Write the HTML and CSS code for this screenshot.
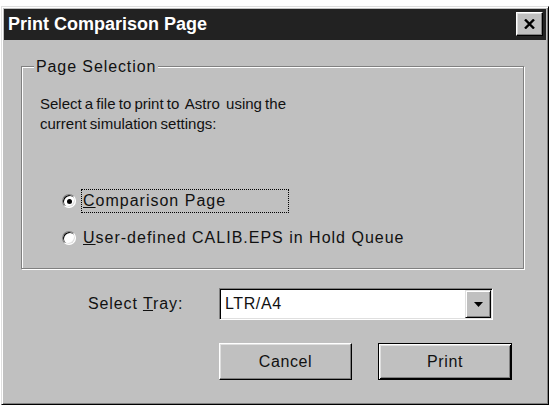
FILE: index.html
```html
<!DOCTYPE html>
<html>
<head>
    <meta charset="UTF-8">
    <meta name="viewport" content="width=device-width">
    <title>Print Comparison Page</title>
    <link rel="stylesheet" href="styles.css">
</head>
<body>
<div class="window">
    <div class="titlebar">
        <span class="title">Print Comparison Page</span>
        <button class="close" aria-label="Close">
            <svg width="11" height="10" viewBox="0 0 11 10">
                <path d="M1 0.5 L10 9.5 M10 0.5 L1 9.5" stroke="#000" stroke-width="2.4" fill="none"/>
            </svg>
        </button>
    </div>
    <div class="content">
        <div class="group">
            <span class="legend">Page Selection</span>
            <p class="intro">Select a file to print to&nbsp; Astro&nbsp; using the<br>current simulation settings:</p>
            <label class="radio-row">
                <span class="radio checked"></span>
                <span class="radio-label focus"><u>C</u>omparison Page</span>
            </label>
            <label class="radio-row second">
                <span class="radio"></span>
                <span class="radio-label"><u>U</u>ser-defined CALIB.EPS in Hold Queue</span>
            </label>
        </div>
        <div class="tray-row">
            <span class="tray-label">Select <u>T</u>ray:</span>
            <div class="combo">
                <span class="combo-value">LTR/A4</span>
                <span class="combo-btn">
                    <svg width="9" height="5" viewBox="0 0 9 5"><path d="M0 0 H9 L4.5 5 Z" fill="#000"/></svg>
                </span>
            </div>
        </div>
        <div class="buttons">
            <button class="btn">Cancel</button>
            <button class="btn default">Print</button>
        </div>
    </div>
</div>
</body>
</html>
```

FILE: styles.css
```css
/* Win95 style dialog */

body {
    background: #fff;
    margin: 0px;
    padding: 0px;
    font-family: "Liberation Sans", Arial, sans-serif;
    font-size: 16px;
    color: #111;
}

.window {
    box-sizing: border-box;
    width: 548px;
    height: 399px;
    margin: 6px 0 0 1px;
    padding: 2px;
    background: #c0c0c0;
    border: 1px solid;
    border-color: #dfdfdf #000 #000 #dfdfdf;
    box-shadow: inset 1px 1px 0 #fff, inset -1px -1px 0 #808080;
}

.titlebar {
    display: flex;
    height: 31px;
    padding-left: 4px;
    background: #222;
}

.title {
    align-self: center;
    color: #fff;
    font-size: 18px;
    font-weight: 700;
}

.close {
    box-sizing: border-box;
    display: flex;
    align-items: center;
    justify-content: center;
    width: 27px;
    height: 24px;
    margin: 3px 3px 0 auto;
    padding: 0;
    background: #c0c0c0;
    border: 1px solid;
    border-color: #fff #000 #000 #fff;
    box-shadow: inset -1px -1px 0 #808080, inset 1px 1px 0 #dfdfdf;
}

.content {
    display: flex;
    flex-direction: column;
}

.group {
    position: relative;
    box-sizing: border-box;
    width: 503px;
    height: 203px;
    margin: 26px 0 0 17px;
    padding: 27px 0 0 18px;
    border: 1px solid #808080;
    box-shadow: 1px 1px 0 #fff, inset 1px 1px 0 #fff;
}

.legend {
    position: absolute;
    top: -10px;
    left: 12px;
    padding: 0 2px;
    line-height: 20px;
    letter-spacing: 0.9px;
    background: #c0c0c0;
}

.intro {
    margin: 0;
    font-size: 15px;
    line-height: 20px;
    word-spacing: -1px;
}

.radio-row {
    display: flex;
    align-items: center;
    margin: 55px 0 0 22px;
}

.radio-row.second {
    margin-top: 13px;
}

.radio {
    box-sizing: border-box;
    position: relative;
    width: 14px;
    height: 14px;
    margin-right: 5px;
    border-radius: 50%;
    background: #fff;
    border: 1px solid;
    border-color: #808080 #fff #fff #808080;
    box-shadow: inset 1px 1px 0 #000, inset -1px -1px 0 #dfdfdf;
}

.radio.checked::after {
    content: "";
    position: absolute;
    top: 3.5px;
    left: 3.5px;
    width: 5px;
    height: 5px;
    border-radius: 50%;
    background: #000;
}

.radio-label {
    box-sizing: border-box;
    width: 208px;
    padding: 0 1px;
    line-height: 22px;
    white-space: nowrap;
    letter-spacing: 1px;
    border: 1px dotted transparent;
}

.radio-label.focus {
    border-color: #000;
}

.tray-row {
    display: flex;
    align-items: center;
    margin-top: 19px;
    padding-left: 84px;
}

.tray-label {
    width: 131px;
    letter-spacing: 0.9px;
}

.combo {
    box-sizing: border-box;
    display: flex;
    align-items: center;
    width: 274px;
    height: 32px;
    padding: 1px;
    background: #fff;
    border: 1px solid;
    border-color: #808080 #fff #fff #808080;
    box-shadow: inset 1px 1px 0 #000, inset -1px -1px 0 #dfdfdf;
}

.combo-value {
    padding-left: 4px;
    letter-spacing: 0.6px;
}

.combo-btn {
    box-sizing: border-box;
    display: flex;
    align-items: center;
    justify-content: center;
    width: 26px;
    height: 28px;
    margin-left: auto;
    background: #c0c0c0;
    border: 1px solid;
    border-color: #dfdfdf #000 #000 #dfdfdf;
    box-shadow: inset 1px 1px 0 #fff, inset -1px -1px 0 #808080;
}

.buttons {
    display: flex;
    margin-top: 23px;
    padding-left: 215px;
}

.btn {
    box-sizing: border-box;
    width: 133px;
    height: 37px;
    padding: 0;
    background: #c0c0c0;
    border: 1px solid;
    border-color: #fff #000 #000 #fff;
    box-shadow: inset -1px -1px 0 #808080, inset 1px 1px 0 #dfdfdf;
    font-family: "Liberation Sans", Arial, sans-serif;
    font-size: 16px;
    letter-spacing: 0.6px;
    color: #111;
}

.btn.default {
    width: 134px;
    margin-left: 26px;
    border-color: #000;
    box-shadow: inset 1px 1px 0 #fff, inset -1px -1px 0 #000, inset 2px 2px 0 #dfdfdf, inset -2px -2px 0 #808080;
}
```
